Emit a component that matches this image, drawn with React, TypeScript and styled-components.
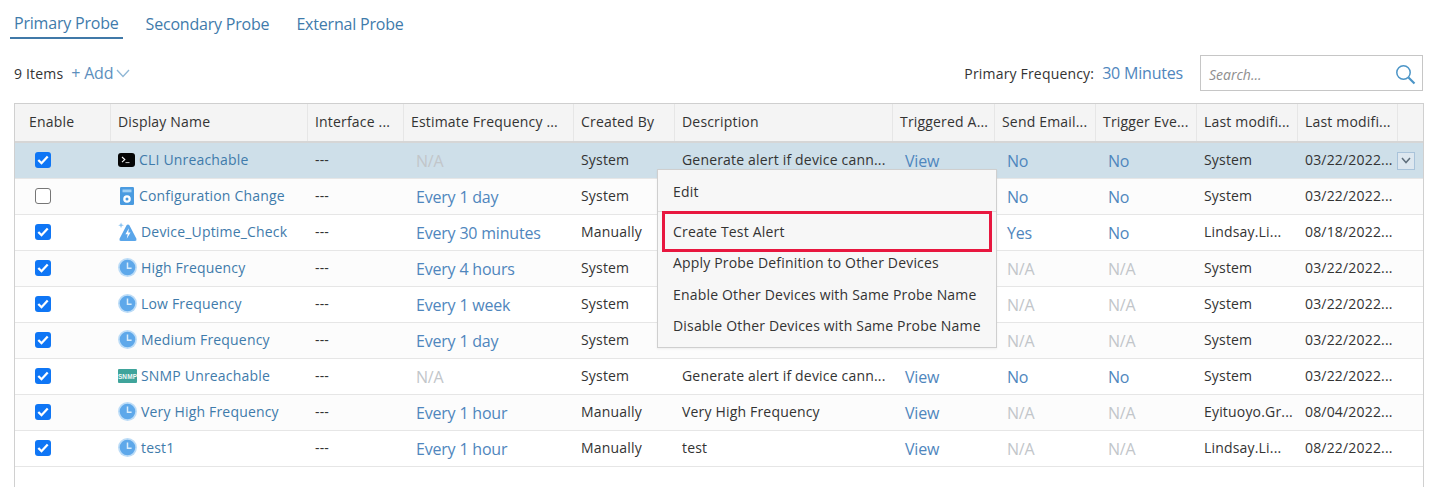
import React from "react";
import styled, { createGlobalStyle } from "styled-components";

const GlobalStyle = createGlobalStyle`
  html, body { margin: 0; padding: 0; background: #fff; }
  body { font-family: "Open Sans", "Noto Sans", sans-serif; font-size: 14px; letter-spacing: 0.18px; color: #333; overflow: hidden; }
`;

const COLUMNS = "95px 197px 96px 170px 101px 218px 102px 101px 101px 101px 100px 1fr";

type Row = {
  on: boolean;
  icon: "cli" | "config" | "uptime" | "clock" | "snmp";
  name: string;
  freq: string;
  by: string;
  desc: string;
  email: string;
  trig: string;
  user: string;
  date: string;
};

const rows: Row[] = [
  { on: true, icon: "cli", name: "CLI Unreachable", freq: "N/A", by: "System", desc: "Generate alert if device cann...", email: "No", trig: "No", user: "System", date: "03/22/2022..." },
  { on: false, icon: "config", name: "Configuration Change", freq: "Every 1 day", by: "System", desc: "", email: "No", trig: "No", user: "System", date: "03/22/2022..." },
  { on: true, icon: "uptime", name: "Device_Uptime_Check", freq: "Every 30 minutes", by: "Manually", desc: "", email: "Yes", trig: "No", user: "Lindsay.Li...", date: "08/18/2022..." },
  { on: true, icon: "clock", name: "High Frequency", freq: "Every 4 hours", by: "System", desc: "", email: "N/A", trig: "N/A", user: "System", date: "03/22/2022..." },
  { on: true, icon: "clock", name: "Low Frequency", freq: "Every 1 week", by: "System", desc: "", email: "N/A", trig: "N/A", user: "System", date: "03/22/2022..." },
  { on: true, icon: "clock", name: "Medium Frequency", freq: "Every 1 day", by: "System", desc: "", email: "N/A", trig: "N/A", user: "System", date: "03/22/2022..." },
  { on: true, icon: "snmp", name: "SNMP Unreachable", freq: "N/A", by: "System", desc: "Generate alert if device cann...", email: "No", trig: "No", user: "System", date: "03/22/2022..." },
  { on: true, icon: "clock", name: "Very High Frequency", freq: "Every 1 hour", by: "Manually", desc: "Very High Frequency", email: "N/A", trig: "N/A", user: "Eyituoyo.Gr...", date: "08/04/2022..." },
  { on: true, icon: "clock", name: "test1", freq: "Every 1 hour", by: "Manually", desc: "test", email: "N/A", trig: "N/A", user: "Lindsay.Li...", date: "08/22/2022..." },
];

const headers = ["Display Name", "Interface ...", "Estimate Frequency ...", "Created By", "Description", "Triggered A...", "Send Email...", "Trigger Eve...", "Last modifi...", "Last modifi..."];

function ProbeIcon({ kind }: { kind: Row["icon"] }) {
  if (kind === "cli") {
    return (
      <svg width="17" height="14" viewBox="0 0 17 14">
        <rect x="0" y="0" width="17" height="14" rx="3" fill="#050505" />
        <path d="M4 4 L6.8 6.6 L4 9.2" stroke="#fff" strokeWidth="1.1" fill="none" />
        <path d="M7.5 9.6 H11.5" stroke="#ccc" strokeWidth="1" />
      </svg>
    );
  }
  if (kind === "config") {
    return (
      <svg width="14" height="18" viewBox="0 0 14 18">
        <rect x="0" y="0" width="14" height="18" rx="1.2" fill="#4a9be0" />
        <rect x="2.5" y="2.5" width="9" height="2.8" fill="#9fd0f5" />
        <circle cx="7" cy="12" r="3.8" fill="#fff" />
        <circle cx="7" cy="12" r="1.5" fill="#4a9be0" />
      </svg>
    );
  }
  if (kind === "uptime") {
    return (
      <svg width="20" height="21" viewBox="0 0 20 21">
        <path d="M10.5 3 Q11.5 3 12 4 L19.4 18 Q20 20.5 18 20.5 H3 Q1 20.5 1.6 18 L9 4 Q9.5 3 10.5 3 Z" fill="#5aa6ea" />
        <path d="M11.5 7 L7.8 13.5 H10.2 L9.2 18 L13.2 11.5 H10.8 Z" fill="#fff" />
        <path d="M3.2 1 L4 3.2 L6.2 4 L4 4.8 L3.2 7 L2.4 4.8 L0.2 4 L2.4 3.2 Z" fill="#8cc4f2" />
      </svg>
    );
  }
  if (kind === "snmp") {
    return (
      <svg width="19" height="14" viewBox="0 0 19 14">
        <rect x="0" y="0" width="19" height="14" rx="1" fill="#3fa49b" />
        <text x="9.5" y="9.6" textAnchor="middle" fontSize="6.4" fontWeight="700" fontFamily="'Liberation Sans', sans-serif" fill="#eef8f6">
          SNMP
        </text>
      </svg>
    );
  }
  return (
    <svg width="19" height="19" viewBox="0 0 19 19">
      <circle cx="9.5" cy="9.5" r="9.5" fill="#bcdcf7" />
      <circle cx="9.5" cy="9.5" r="7.8" fill="#5ea8ea" />
      <path d="M9.5 4.6 V10.2 H13.6" stroke="#d8ecfb" strokeWidth="1.5" fill="none" />
    </svg>
  );
}

export default function App() {
  return (
    <Page>
      <GlobalStyle />
      <Tabs>
        <Tab $active>Primary Probe</Tab>
        <Tab>Secondary Probe</Tab>
        <Tab>External Probe</Tab>
      </Tabs>
      <Toolbar>
        <Count>9 Items</Count>
        <AddLink>+ Add</AddLink>
        <svg width="14" height="9" viewBox="0 0 14 9">
          <path d="M1 1 L7 7.5 L13 1" stroke="#8fb7d6" strokeWidth="1.3" fill="none" />
        </svg>
        <Spacer />
        <FreqLabel>Primary Frequency:</FreqLabel>
        <FreqValue>30 Minutes</FreqValue>
        <SearchBox>
          <SearchHint>Search...</SearchHint>
          <svg width="21" height="21" viewBox="0 0 21 21">
            <circle cx="8.5" cy="8.5" r="6.7" stroke="#4c95c7" strokeWidth="1.5" fill="none" />
            <path d="M13.5 13.5 L19.5 19.5" stroke="#4c95c7" strokeWidth="2.2" />
          </svg>
        </SearchBox>
      </Toolbar>
      <Table>
        <HeadRow>
          <EnableHead>Enable</EnableHead>
          {headers.map((h, i) => (
            <HeadCell key={i}>{h}</HeadCell>
          ))}
          <HeadCell />
        </HeadRow>
        {rows.map((r, i) => (
          <BodyRow key={r.name} $selected={i === 0}>
            <CheckCell>
              <Check $on={r.on}>
                {r.on && (
                  <svg width="12" height="10" viewBox="0 0 12 10">
                    <path d="M1.3 5 L4.5 8.2 L10.7 1.5" stroke="#fff" strokeWidth="2.3" fill="none" />
                  </svg>
                )}
              </Check>
            </CheckCell>
            <NameCell>
              <IconSlot $narrow={r.icon === "cli" || r.icon === "config"}>
                <ProbeIcon kind={r.icon} />
              </IconSlot>
              <ProbeName>{r.name}</ProbeName>
            </NameCell>
            <Cell>---</Cell>
            <LinkCell $muted={r.freq === "N/A"}>{r.freq}</LinkCell>
            <Cell>{r.by}</Cell>
            <Cell>{r.desc}</Cell>
            <LinkCell>{r.desc && "View"}</LinkCell>
            <LinkCell $muted={r.email === "N/A"}>{r.email}</LinkCell>
            <LinkCell $muted={r.trig === "N/A"}>{r.trig}</LinkCell>
            <Cell>{r.user}</Cell>
            <Cell>{r.date}</Cell>
            <MenuCell>
              {i === 0 && (
                <RowToggle>
                  <svg width="10" height="7" viewBox="0 0 10 7">
                    <path d="M1 1 L5 5.5 L9 1" stroke="#5f6f7c" strokeWidth="1.5" fill="none" />
                  </svg>
                </RowToggle>
              )}
            </MenuCell>
          </BodyRow>
        ))}
        <ContextMenu>
          <EditItem>Edit</EditItem>
          <MenuRule />
          <MenuList>
            <HighlightedItem>Create Test Alert</HighlightedItem>
            <MenuItem>Apply Probe Definition to Other Devices</MenuItem>
            <MenuItem>Enable Other Devices with Same Probe Name</MenuItem>
            <MenuItem>Disable Other Devices with Same Probe Name</MenuItem>
          </MenuList>
        </ContextMenu>
      </Table>
    </Page>
  );
}

const Page = styled.div`
  width: 1434px;
  height: 487px;
  overflow: hidden;
  padding: 0 10px 0 14px;
  box-sizing: border-box;
`;
const Tabs = styled.div`
  display: flex;
  height: 39px;
  margin-left: -4px;
  gap: 19px;
  align-items: flex-start;
`;
const Tab = styled.div<{ $active?: boolean }>`
  height: 39px;
  box-sizing: border-box;
  padding: ${(p) => (p.$active ? "12px" : "13px")} 4px 0;
  font-size: 16px;
  letter-spacing: -0.2px;
  line-height: 23px;
  color: #3f7bab;
  border-bottom: ${(p) => (p.$active ? "2px solid #4079a8" : "none")};
`;
const Toolbar = styled.div`
  display: flex;
  align-items: center;
  height: 36px;
  margin-top: 16px;
  margin-bottom: 12px;
  padding-right: 1px;
`;
const Count = styled.span`
  color: #333;
  margin-right: 8px;
`;
const AddLink = styled.span`
  font-size: 16px;
  letter-spacing: -0.2px;
  color: #5c8fbd;
  margin-right: 3px;
`;
const Spacer = styled.div`
  flex: 1;
`;
const FreqLabel = styled.span`
  color: #333;
  margin-right: 8px;
`;
const FreqValue = styled.span`
  font-size: 16px;
  letter-spacing: -0.2px;
  color: #4f86bd;
  margin-right: 17px;
`;
const SearchBox = styled.div`
  width: 223px;
  height: 36px;
  box-sizing: border-box;
  border: 1px solid #c6c6c6;
  display: flex;
  align-items: center;
  justify-content: space-between;
  padding: 2px 6px 0 8px;
`;
const SearchHint = styled.span`
  font-size: 14px;
  letter-spacing: 0;
  font-style: italic;
  color: #8e8e8e;
`;
const Table = styled.div`
  position: relative;
  width: 1410px;
  height: 400px;
  box-sizing: border-box;
  border-left: 1px solid #d0d0d0;
  border-right: 1px solid #d0d0d0;
  border-top: 1px solid #cfcfcf;
`;
const HeadRow = styled.div`
  display: grid;
  grid-template-columns: ${COLUMNS};
  height: 39px;
  box-sizing: border-box;
  background: #f4f4f4;
  border-bottom: 2px solid #d6d6d6;
`;
const HeadCell = styled.div`
  display: flex;
  align-items: center;
  padding: 0 0 2px 7px;
  color: #333;
  white-space: nowrap;
  overflow: hidden;
  border-left: 1px solid #e6e6e6;
`;
const EnableHead = styled(HeadCell)`
  padding-left: 14px;
  border-left: none;
`;
const BodyRow = styled.div<{ $selected?: boolean }>`
  display: grid;
  grid-template-columns: ${COLUMNS};
  height: 36px;
  box-sizing: border-box;
  background: ${(p) => (p.$selected ? "#cedfe9" : "#fff")};
  border-bottom: 1px solid #e6e6e6;
  &:nth-child(odd) {
    background: ${(p) => (p.$selected ? "#cedfe9" : "#fcfcfc")};
  }
`;
const Cell = styled.div`
  display: flex;
  align-items: center;
  padding: 0 0 3px 8px;
  color: #333;
  white-space: nowrap;
  overflow: hidden;
`;
const CheckCell = styled(Cell)`
  padding: 0 0 2px 20px;
`;
const Check = styled.span<{ $on: boolean }>`
  width: 16px;
  height: 16px;
  box-sizing: border-box;
  border-radius: 3px;
  display: flex;
  align-items: center;
  justify-content: center;
  background: ${(p) => (p.$on ? "#0f76f5" : "#fff")};
  border: ${(p) => (p.$on ? "none" : "1.5px solid #767676")};
`;
const NameCell = styled(Cell)`
  padding: 0 0 1px 8px;
`;
const IconSlot = styled.span<{ $narrow?: boolean }>`
  display: flex;
  align-items: center;
  justify-content: center;
  flex: none;
  width: ${(p) => (p.$narrow ? "17px" : "19px")};
  margin-right: 4px;
  margin-top: -1px;
`;
const ProbeName = styled.span`
  color: #3f7bab;
  margin-top: -1px;
`;
const LinkCell = styled(Cell)<{ $muted?: boolean }>`
  font-size: 16px;
  letter-spacing: -0.2px;
  padding: 2px 0 1px 13px;
  color: ${(p) => (p.$muted ? "#c2c6ca" : "#4f86bd")};
`;
const MenuCell = styled(Cell)`
  padding: 0;
  overflow: visible;
`;
const RowToggle = styled.span`
  width: 18px;
  height: 18px;
  box-sizing: border-box;
  display: flex;
  align-items: center;
  justify-content: center;
  background: #dde7ef;
  border: 1px solid #a9c3da;
`;
const ContextMenu = styled.div`
  position: absolute;
  left: 642px;
  top: 65px;
  width: 340px;
  height: 179px;
  box-sizing: border-box;
  background: #f7f7f7;
  border: 1px solid #cfcfcf;
  box-shadow: 0 1px 2px rgba(0, 0, 0, 0.06);
`;
const MenuItem = styled.div`
  height: 31.7px;
  display: flex;
  align-items: center;
  padding-left: 15px;
  color: #333;
  white-space: nowrap;
`;
const EditItem = styled(MenuItem)`
  height: 41px;
  padding-top: 2px;
  box-sizing: border-box;
`;
const MenuRule = styled.div`
  height: 1px;
  background: #dcdcdc;
`;
const MenuList = styled.div`
  padding-top: 4px;
`;
const HighlightedItem = styled(MenuItem)`
  position: relative;
  height: 30.7px;
  &::after {
    content: "";
    position: absolute;
    left: 4px;
    right: 4px;
    top: -5px;
    height: 41px;
    box-sizing: border-box;
    border: 3px solid #e8173f;
  }
`;
